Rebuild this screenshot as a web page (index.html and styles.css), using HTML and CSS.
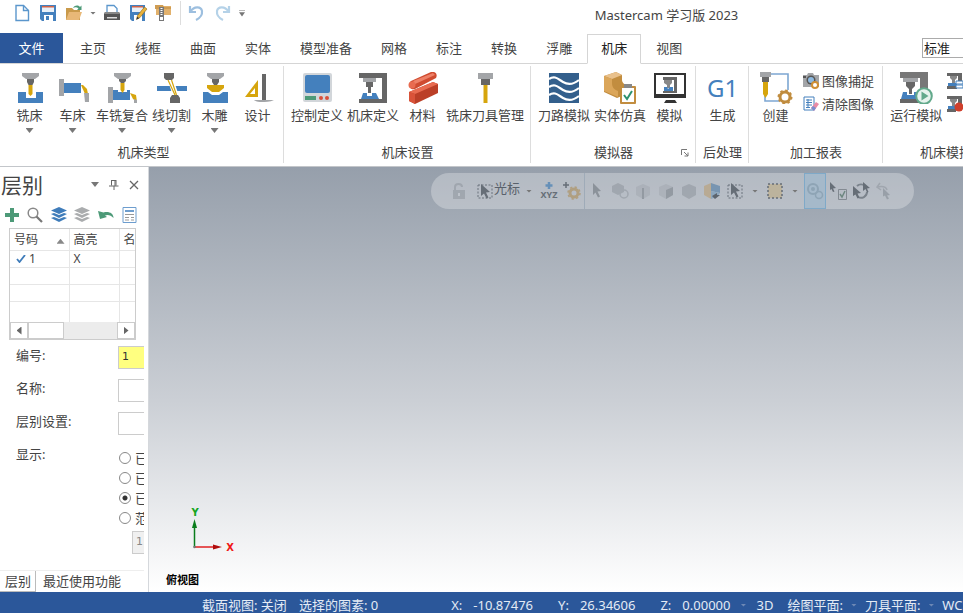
FILE: index.html
```html
<!DOCTYPE html>
<html lang="zh-CN">
<head>
  <meta charset="UTF-8">
  <title>Mastercam 学习版 2023</title>
  <link rel="stylesheet" href="styles.css">
</head>
<body>

<!-- Title bar -->
<header class="titlebar">
  <div class="quick">
    <button aria-label="新建"><svg width="20" height="20" viewBox="0 0 20 20"><path d="M4 2.5h7.500l5 5V17.500H4z" fill="#fff" stroke="#5b96cc" stroke-width="1.400"/><path d="M11.500 2.500v5h5" fill="none" stroke="#5b96cc" stroke-width="1.400"/></svg></button>
    <button aria-label="保存"><svg width="20" height="20" viewBox="0 0 20 20"><path d="M2 2h16v16H4l-2-2z" fill="#4480bd"/><path d="M4 3h12v6H4z" fill="#e8f0f8"/><path d="M4 3h12v1.500H4z" fill="#d0644b"/><path d="M6 12h9v6H6z" fill="#fff"/><path d="M8 13h3v4H8z" fill="#4480bd"/></svg></button>
    <button aria-label="打开"><svg width="20" height="20" viewBox="0 0 20 20"><path d="M2 5h6l2 2h6v10H2z" fill="#c99a4b"/><path d="M2 17l3-8h13l-3 8z" fill="#e8b877"/><path d="M9 5c2-3 5-3 7-1l1.500-1.500V7H13l1.500-1.500C13 4 11 4 9 5z" fill="#4d9a78"/></svg></button>
    <i class="caret small"></i>
    <button aria-label="打印"><svg width="20" height="20" viewBox="0 0 20 20"><path d="M5 9V2.500h7l3 3V9" fill="#fff" stroke="#5b96cc" stroke-width="1.300"/><path d="M3 9h14l1 2v6H2v-6z" fill="#555"/><path d="M3 9h14l1 2H2z" fill="#888"/><path d="M5 14h10v1.500H5z" fill="#ddd"/></svg></button>
    <button aria-label="另存为"><svg width="20" height="20" viewBox="0 0 20 20"><path d="M2 2h15v16H4l-2-2z" fill="#4480bd"/><path d="M4 3h11v6H4z" fill="#e8f0f8"/><path d="M4 3h11v1.500H4z" fill="#d0644b"/><path d="M6 12h8v6H6z" fill="#fff"/><path d="M8.500 16.500l1-4L16.500 4l2.500 2-7 8.500z" fill="#e8b23c" stroke="#8a641c" stroke-width=".6"/><path d="M8.500 16.500l.7-2.700 2 1.500z" fill="#333"/></svg></button>
    <button aria-label="压缩"><svg width="20" height="20" viewBox="0 0 20 20"><path d="M2 3h15v9H2z" fill="#e2b16c"/><path d="M1 2h8l1 2h7v2H1z" fill="#cf9c52"/><path d="M5 4h5v14H5z" fill="#777"/><path d="M6.500 5h2v1h-2zM6.500 7h2v1h-2zM6.500 9h2v1h-2zM6.500 11h2v1h-2zM6 14h3v3H6z" fill="#fff"/></svg></button>
    <i class="quick-line"></i>
    <button aria-label="撤销"><svg width="20" height="20" viewBox="0 0 20 20"><path d="M3 3v6h6M3.500 8.500C7 3 14 3 15 8c.5 4-2 7-6 9" fill="none" stroke="#9dbfdf" stroke-width="2.200"/></svg></button>
    <button aria-label="重做"><svg width="20" height="20" viewBox="0 0 20 20"><path d="M16 3v6h-6M15.500 8.500C12 3 5 3 4 8c-.5 4 2 7 6 9" fill="none" stroke="#b5d2e8" stroke-width="2.200"/></svg></button>
    <i class="caret small more"></i>
  </div>
  <div class="app-title">Mastercam 学习版 2023</div>
</header>

<!-- Ribbon tabs -->
<nav class="tabs">
  <button class="tab file">文件</button>
  <button class="tab">主页</button>
  <button class="tab">线框</button>
  <button class="tab">曲面</button>
  <button class="tab">实体</button>
  <button class="tab">模型准备</button>
  <button class="tab">网格</button>
  <button class="tab">标注</button>
  <button class="tab">转换</button>
  <button class="tab">浮雕</button>
  <button class="tab active">机床</button>
  <button class="tab">视图</button>
  <select class="style-select" aria-label="线型"><option>标准</option></select>
</nav>

<!-- Ribbon -->
<section class="ribbon">
  <div class="group">
    <div class="tools">
      <button class="tool"><svg width="32" height="32" viewBox="0 0 32 32"><path d="M4 20h8v6h10v-6h7v11H4z" fill="#4480bd"/><path d="M8 1h17v3l-4 3h-9L8 4z" fill="#a3a5a8"/><path d="M13 7h7v3l-1.500 3h-4L13 10z" fill="#666"/><path d="M14.500 13h4v9l-2 2-2-2z" fill="#d6a50d"/></svg>铣床<i class="caret"></i></button>
      <button class="tool"><svg width="32" height="32" viewBox="0 0 32 32"><path d="M2 7h5v17H2z" fill="#a3a5a8"/><path d="M7 11h17v10H7z" fill="#4480bd"/><path d="M24 13h2l4 4 1 5h-3z" fill="#d6a50d"/><path d="M27 21h5v9h-4z" fill="#a3a5a8"/></svg>车床<i class="caret"></i></button>
      <button class="tool"><svg width="32" height="32" viewBox="0 0 32 32"><path d="M2 15h5v16H2z" fill="#a3a5a8"/><path d="M7 18h17v10H7z" fill="#4480bd"/><path d="M8 1h17v3l-4 3h-9L8 4z" fill="#a3a5a8"/><path d="M13 7h7v2l-2 2h-3l-2-2z" fill="#666"/><path d="M12 14h9v6h-9z" fill="#fff"/><path d="M14.500 11h4v7l-2 3-2-3z" fill="#d6a50d"/><path d="M24 21l6 2 1 7-4-3z" fill="#d6a50d"/><path d="M28 27l3 1v3h-3z" fill="#a3a5a8"/></svg>车铣复合<i class="caret"></i></button>
      <button class="tool"><svg width="32" height="32" viewBox="0 0 32 32"><path d="M1 14h30v5H1z" fill="#4480bd"/><path d="M13 12h6l3 9h-6z" fill="#fff"/><path d="M8 1h10v5l-2 2h-6L8 6zM16 23h6l2 3v5H14v-5z" fill="#666"/><path d="M12 8l7 15M15.500 8l5 15" stroke="#d6a50d" stroke-width="1.200"/></svg>线切割<i class="caret"></i></button>
      <button class="tool"><svg width="32" height="32" viewBox="0 0 32 32"><path d="M4 20h5l4 3h7l4-3h5v11H4z" fill="#4480bd"/><path d="M8 1h17v3l-4 3h-9L8 4z" fill="#a3a5a8"/><path d="M13 7h7v3l-2 3h-3l-2-3z" fill="#666"/><path d="M8 13h17v3l-5 4h-7l-5-4z" fill="#d6a50d"/></svg>木雕<i class="caret"></i></button>
      <button class="tool"><svg width="32" height="32" viewBox="0 0 32 32"><path d="M16 8v17H3zM13 16l-5 6h5z" fill="#d6a50d" fill-rule="evenodd"/><path d="M20 2h4v26h-4z" fill="#666"/><path d="M12 28h20c-4 2-9 2-12 2s-5 0-8-2z" fill="#a3a5a8"/></svg>设计</button>
    </div>
    <div class="group-name">机床类型</div>
  </div>

  <div class="group">
    <div class="tools">
      <button class="tool"><svg width="32" height="32" viewBox="0 0 32 32"><rect x="2" y="1" width="29" height="29" rx="2" fill="#d2d6da"/><rect x="4" y="3" width="25" height="18" rx="2" fill="#4480bd"/><path d="M4 24h11v4H4z" fill="#4d9a78"/><circle cx="20" cy="26" r="2" fill="#d9503a"/><circle cx="26" cy="26" r="2" fill="#d9503a"/></svg>控制定义</button>
      <button class="tool"><svg width="32" height="32" viewBox="0 0 32 32"><path d="M2 1h28v30H2v-4h23V6H2z" fill="#666"/><path d="M6 6h13v4H6z" fill="#a3a5a8"/><path d="M9 10h7v5h-2v6h-3v-6H9z" fill="#666"/><path d="M6 21h4v3h5v-3h4l3 6H4z" fill="#4480bd"/></svg>机床定义</button>
      <button class="tool"><svg width="32" height="32" viewBox="0 0 32 32"><path d="M4 9L24 0c4-1 7 2 5 6L8 17C3 19 0 12 4 9z" fill="#cf4b30"/><path d="M6 9L26 1l2 2L8 12z" fill="#ee8067"/><circle cx="5" cy="13" r="3.500" fill="#e86b50"/><path d="M2 20l24-10 5 2v9L8 32l-6-3z" fill="#bb3f27"/><path d="M2 20l24-10 5 2L8 22z" fill="#e86b50"/><path d="M2 20l6 2v10l-6-3z" fill="#d95339"/></svg>材料</button>
      <button class="tool"><svg width="32" height="32" viewBox="0 0 32 32"><path d="M9 1h15v6H9z" fill="#a3a5a8"/><path d="M12 7h9v6h-9z" fill="#666"/><path d="M14.500 13h4v18h-4z" fill="#d6a50d"/></svg>铣床刀具管理</button>
    </div>
    <div class="group-name">机床设置</div>
  </div>

  <div class="group">
    <div class="tools">
      <button class="tool"><svg width="32" height="32" viewBox="0 0 32 32"><path d="M1 1h30v30H1z" fill="#335f8c"/><path d="M1 7c6-4 9 0 14 3s11 2 16-2M1 15c6-4 9 0 14 3s11 2 16-2M1 23c6-4 9 0 14 3s11 2 16-2" fill="none" stroke="#fff" stroke-width="2.200"/></svg>刀路模拟</button>
      <button class="tool"><svg width="32" height="32" viewBox="0 0 32 32"><path d="M0 4l12-4 6 3v5c0 3 3 5 7 6v7l-12 5-13-6z" fill="#c28d3f"/><path d="M0 4l12-4 6 3-10 4z" fill="#e9c18c"/><path d="M0 4l8 3v4c0 5 3 7 6 8v6L0 19z" fill="#dba65a"/><rect x="16" y="14" width="16" height="18" rx="1" fill="#c28d3f"/><path d="M18 16h12v14H18z" fill="#fff"/><path d="M20 12h8v4h-8z" fill="#888"/><path d="M20 23l3 4 5-8" fill="none" stroke="#2c9270" stroke-width="2"/></svg>实体仿真</button>
      <button class="tool"><svg width="32" height="32" viewBox="0 0 32 32"><path d="M0 1h32v25H0z" fill="#333"/><path d="M2 3h28v19H2z" fill="#fff"/><path d="M12 28h9l2 3H10z" fill="#333"/><path d="M9 5h14v16H9v-2h11V8H9z" fill="#666"/><path d="M10 8h8v3l-2 2v3h-3v-3l-3-2z" fill="#888"/><path d="M10 15h3l1 2 2-2h3v4h-9z" fill="#4480bd"/></svg>模拟</button>
    </div>
    <div class="group-name">模拟器</div>
    <button class="launcher" aria-label="模拟器选项"><svg width="8" height="8" viewBox="0 0 8 8"><path d="M.5 6V.5H6M3 3l4 4M7 3.500V7H3.500" fill="none" stroke="#777"/></svg></button>
  </div>

  <div class="group">
    <div class="tools">
      <button class="tool"><span class="g1">G1</span>生成</button>
    </div>
    <div class="group-name">后处理</div>
  </div>

  <div class="group">
    <div class="tools">
      <button class="tool"><svg width="34" height="32" viewBox="0 0 34 32"><path d="M9 2h20v16M6 22v7h14" fill="none" stroke="#7da7d2" stroke-width="1.600"/><path d="M1 0h11v5H1z" fill="#a3a5a8"/><path d="M3 5h7v5H3z" fill="#666"/><path d="M4 10h5v12l-2.500 4L4 22z" fill="#d6a50d"/><circle cx="26" cy="25" r="5" fill="#fff" stroke="#c08c3e" stroke-width="3"/><circle cx="26" cy="25" r="6.700" fill="none" stroke="#c08c3e" stroke-width="1.600" stroke-dasharray="2.600 2.660"/></svg>创建</button>
      <div class="small-tools">
        <button class="small-tool"><svg width="16" height="16" viewBox="0 0 16 16"><path d="M0 2h4l1-2h5l1 2h5v12H0z" fill="#a3a5a8"/><path d="M0 3h3v2H0z" fill="#555"/><circle cx="8" cy="7" r="4.500" fill="#555"/><circle cx="8" cy="7" r="3" fill="#8db9e0"/><circle cx="12" cy="12" r="3" fill="#fff" stroke="#d08f34" stroke-width="2"/></svg>图像捕捉</button>
        <button class="small-tool"><svg width="16" height="16" viewBox="0 0 16 16"><path d="M1 1h10v13H1z" fill="#fff" stroke="#4480bd"/><path d="M3 4h6M3 6.500h6M3 9h6M3 11.500h4M5 3v9" stroke="#4480bd"/><path d="M8 12l5-6 3 2-5 7z" fill="#e98ba6"/><path d="M8 12l2-2 3 2-2 3z" fill="#7a8fd0"/></svg>清除图像</button>
      </div>
    </div>
    <div class="group-name">加工报表</div>
  </div>

  <div class="group wide">
    <div class="tools">
      <button class="tool"><svg width="34" height="32" viewBox="0 0 34 32"><path d="M1 0h28v30h-8V6H1z" fill="#777"/><path d="M4 6h15v4H4z" fill="#a3a5a8"/><path d="M7 10h9v4l-3 3v5h-3v-5l-3-3z" fill="#666"/><path d="M4 20h4v3h7v-3h4v7H2z" fill="#4480bd"/><path d="M1 27h20v4H1z" fill="#666"/><circle cx="25" cy="24" r="7.800" fill="#e6f3ed" stroke="#62a98b" stroke-width="2"/><path d="M22.500 19.500l7 4.500-7 4.500z" fill="#62a98b"/></svg>运行模拟</button>
      <div class="small-tools">
        <button class="small-tool" aria-label="模拟设置"><svg width="16" height="16" viewBox="0 0 16 16"><path d="M0 0h15v10h-4V3H0z" fill="#666"/><path d="M3 3h7v2L8 7v3H5V7L3 5z" fill="#888"/><path d="M1 10h9v3H1z" fill="#4480bd"/><path d="M0 13h10v3H0z" fill="#666"/><path d="M9 8h7v3H9zM9 12h7v3H9z" fill="#fff" stroke="#4480bd"/></svg></button>
        <button class="small-tool" aria-label="模拟记录"><svg width="16" height="16" viewBox="0 0 16 16"><path d="M0 0h15v10h-4V3H0z" fill="#666"/><path d="M3 3h7v2L8 7v3H5V7L3 5z" fill="#888"/><path d="M1 10h8v3H1z" fill="#4480bd"/><path d="M0 13h9v3H0z" fill="#666"/><circle cx="12" cy="11" r="4.500" fill="#cf3f2c"/></svg></button>
      </div>
    </div>
    <div class="group-name">机床模拟</div>
  </div>
</section>

<main class="work">
  <!-- Levels panel -->
  <aside class="panel">
    <div class="panel-head">
      <h2>层别</h2>
      <button aria-label="菜单"><i class="caret"></i></button>
      <button aria-label="固定"><svg width="10" height="10" viewBox="0 0 10 10"><path d="M2.500 0v5.500M7 0v5.500M2.500.5H7M0 6h9.500M5 6v4M6 0v6" fill="none" stroke="#666"/></svg></button>
      <button aria-label="关闭"><svg width="10" height="10" viewBox="0 0 10 10"><path d="M1 1l8 8M9 1L1 9" stroke="#666" stroke-width="1.300"/></svg></button>
    </div>
    <div class="panel-tools">
      <button aria-label="添加"><svg width="16" height="16" viewBox="0 0 16 16"><path d="M6 1h4v5h5v4h-5v5H6v-5H1V6h5z" fill="#4d9a78"/></svg></button>
      <button aria-label="查找"><svg width="16" height="16" viewBox="0 0 16 16"><circle cx="6" cy="6" r="4.800" fill="#fff" stroke="#888" stroke-width="1.500"/><path d="M9.500 9.500l5.500 5.500" stroke="#777" stroke-width="2.200"/></svg></button>
      <button aria-label="显示全部"><svg width="16" height="16" viewBox="0 0 16 16"><path d="M8 0l8 3.500L8 7 0 3.500zM0 7l3-1 5 2 5-2 3 1-8 4zM0 11l3-1 5 2 5-2 3 1-8 4z" fill="#3f7cba"/></svg></button>
      <button aria-label="隐藏全部"><svg width="16" height="16" viewBox="0 0 16 16"><path d="M8 0l8 3.500L8 7 0 3.500zM0 7l3-1 5 2 5-2 3 1-8 4zM0 11l3-1 5 2 5-2 3 1-8 4z" fill="#aaacae"/></svg></button>
      <button aria-label="重置"><svg width="16" height="16" viewBox="0 0 16 16"><path d="M0 4l2 8 7-2-2-1.500c3-1.500 6 0 8.500 2.500 0-5-5-7-10-5.500z" fill="#4d9a78"/></svg></button>
      <button aria-label="选项"><svg width="16" height="16" viewBox="0 0 16 16"><path d="M2 .5h13v15H2z" fill="#fff" stroke="#6d9dce"/><path d="M4 3h9v2H4z" fill="#6d9dce"/><path d="M4 7.500h9M4 10.500h4M4 13h4M10 10.500h3M10 13h3" stroke="#999"/></svg></button>
    </div>

    <div class="level-box">
      <table class="levels">
        <thead>
          <tr><th class="num">号码<i class="sort"></i></th><th class="lit">高亮</th><th>名</th></tr>
        </thead>
        <tbody>
          <tr><td><svg width="10" height="8" viewBox="0 0 10 8"><path d="M1 4l2.500 3L9 0" fill="none" stroke="#3f7cba" stroke-width="1.800"/></svg>1</td><td>X</td><td></td></tr>
          <tr><td></td><td></td><td></td></tr>
          <tr><td></td><td></td><td></td></tr>
          <tr><td></td><td></td><td></td></tr>
        </tbody>
      </table>
      <div class="scroll">
        <button aria-label="向左"><i class="arrow-left"></i></button>
        <span class="thumb"></span>
        <button class="end" aria-label="向右"><i class="arrow-right"></i></button>
      </div>
    </div>

    <form class="level-form">
      <label for="levelNumber">编号:</label>
      <input class="field yellow" id="levelNumber" type="text" value="1">
      <label for="levelName">名称:</label>
      <input class="field" id="levelName" type="text">
      <label for="levelSet">层别设置:</label>
      <input class="field" id="levelSet" type="text">
      <span class="show-label">显示:</span>
      <div class="radios">
        <label><input type="radio" name="show">已命名</label>
        <label><input type="radio" name="show">已使用</label>
        <label><input type="radio" name="show" checked>已命名或已使用</label>
        <label><input type="radio" name="show">范围</label>
        <input class="range" type="text" value="1" aria-label="范围" disabled>
      </div>
    </form>

    <div class="panel-tabs">
      <button class="current">层别</button>
      <button>最近使用功能</button>
    </div>
  </aside>

  <!-- Graphics window -->
  <section class="canvas">
    <div class="select-bar">
      <button aria-label="锁定"><svg width="18" height="18" viewBox="0 0 18 18" class="dim"><path d="M3 8h12v9H3z" fill="#8b929a"/><path d="M5 8V5c0-4 7-4 7 0" fill="none" stroke="#8b929a" stroke-width="2"/><path d="M8 11h2v3H8z" fill="#c3c8cf"/></svg></button>
      <button class="with-text"><svg width="18" height="18" viewBox="0 0 18 18"><path d="M2 3h14v13H2z" fill="none" stroke="#6b737c" stroke-dasharray="2 1.500"/><path d="M5 2l9 8-4 .5 2.500 5-2 1-2.500-5L5 14z" fill="#666e77"/></svg><span>光标</span></button>
      <i class="caret small"></i>
      <button aria-label="坐标"><svg width="20" height="18" viewBox="0 0 20 18"><path d="M10 0v7M6.500 3.500h7" stroke="#6690b8" stroke-width="2.500"/><text x="10" y="16" class="xyz">XYZ</text></svg></button>
      <button aria-label="选择设置"><svg width="18" height="18" viewBox="0 0 18 18"><path d="M3 0v6M0 3h6" stroke="#666e77" stroke-width="1.500"/><circle cx="11" cy="11" r="4" fill="none" stroke="#b09f80" stroke-width="3"/><circle cx="11" cy="11" r="6" fill="none" stroke="#b09f80" stroke-width="1.500" stroke-dasharray="2.300 2.400"/></svg></button>
      <i class="bar-line"></i>
      <button aria-label="选择"><svg width="18" height="18" viewBox="0 0 18 18"><path d="M5 1l8 8-3.500.5 2.500 5-2 1-2.500-5L5 13z" fill="#8b929a"/></svg></button>
      <button aria-label="实体"><svg width="18" height="18" viewBox="0 0 18 18" class="dim"><path d="M1 4l6-3 6 3v6l-6 3-6-3z" fill="#8b929a"/><circle cx="13" cy="12" r="4" fill="none" stroke="#8b929a" stroke-width="1.500"/></svg></button>
      <button aria-label="边界"><svg width="18" height="18" viewBox="0 0 18 18" class="dim"><path d="M2 5l7-3 7 3v8l-7 4-7-4z" fill="#a2a8b0"/><path d="M9 6v11" stroke="#707880" stroke-width="2"/></svg></button>
      <button aria-label="实体面"><svg width="18" height="18" viewBox="0 0 18 18" class="dim"><path d="M2 5l7-3 7 3v8l-7 4-7-4z" fill="#a2a8b0"/><path d="M9 8l7-3v8l-7 4z" fill="#707880"/></svg></button>
      <button aria-label="主体"><svg width="18" height="18" viewBox="0 0 18 18" class="dim"><path d="M2 5l7-3 7 3v8l-7 4-7-4z" fill="#8b929a"/></svg></button>
      <button aria-label="背面"><svg width="18" height="18" viewBox="0 0 18 18"><path d="M1 4l7-3v16l-7-4z" fill="#b8aa94"/><path d="M8 1l9 3v7l-9-2z" fill="#7895b1"/><path d="M8 9l9 2-3 4-6 2z" fill="#8ca7bf"/><path d="M9 14l5-3v2h3l-5 4z" fill="#5d656e"/></svg></button>
      <button aria-label="窗选"><svg width="18" height="18" viewBox="0 0 18 18"><path d="M2 3h14v13H2z" fill="none" stroke="#6b737c" stroke-dasharray="2 1.500"/><path d="M5 1l9 8-4 .5 2.500 5-2 1-2.500-5L5 13z" fill="#666e77"/></svg></button>
      <i class="caret small"></i>
      <button aria-label="范围内"><svg width="18" height="18" viewBox="0 0 18 18"><path d="M2 2h14v14H2z" fill="#bcb39d" stroke="#666e77" stroke-width="1.500" stroke-dasharray="2 2"/></svg></button>
      <i class="caret small"></i>
      <button class="on" aria-label="验证选择"><svg width="18" height="18" viewBox="0 0 18 18" class="dim"><circle cx="7" cy="7" r="5" fill="none" stroke="#7890a2" stroke-width="2"/><circle cx="7" cy="7" r="2" fill="#7890a2"/><circle cx="13" cy="13" r="3.500" fill="none" stroke="#7890a2" stroke-width="1.500"/></svg></button>
      <button aria-label="反选"><svg width="18" height="18" viewBox="0 0 18 18"><path d="M1 0l6 6-3 .5 1.500 3-1.500.5-1.500-3L1 8z" fill="#666e77"/><path d="M9.500 7.500h8v10h-8z" fill="none" stroke="#838a92"/><path d="M11 12l2 3 3-6" fill="none" stroke="#6d8780" stroke-width="1.500"/></svg></button>
      <button aria-label="循环选择"><svg width="18" height="18" viewBox="0 0 18 18"><path d="M5 4a6 6 0 0 1 8 0M15 10a6 6 0 0 1-9 5" fill="none" stroke="#7b838c" stroke-width="2"/><path d="M1 4l8 7-3.500.5 2 4-2 1-2-4L1 14zM11 0l7 6-3 .5 1.500 3.500-1.500.5-1.500-3.500L11 9z" fill="#666e77"/></svg></button>
      <button aria-label="上一选择"><svg width="18" height="18" viewBox="0 0 18 18" class="dim"><path d="M5 1L2 5l4 3M2 5c5-1 9-1 10 3" fill="none" stroke="#8b929a" stroke-width="1.500"/><path d="M8 6l7 7-3 .5 2 3-2 1-2-4-2 1z" fill="#7b838c"/></svg></button>
    </div>

    <svg class="axes" width="50" height="50" viewBox="0 0 50 50">
      <path d="M10.500 41V20" stroke="#0a7d1c" stroke-width="1.500"/>
      <path d="M8 22l2.500-9 2.500 9z" fill="#0a7d1c"/>
      <path d="M11 41h18" stroke="#e02020" stroke-width="1.500"/>
      <path d="M29 38.500l9 2.500-9 2.500z" fill="#b00d0d"/>
      <circle cx="10.500" cy="41" r="1.300" fill="#777"/>
      <text x="11" y="10" class="axis-y">Y</text>
      <text x="46" y="45" class="axis-x">X</text>
    </svg>
    <div class="view-name">俯视图</div>
  </section>
</main>

<footer class="status">
  <span class="section-view">截面视图: 关闭</span>
  <span class="picked">选择的图素: 0</span>
  <span class="coord"><b>X:</b>-10.87476</span>
  <span class="coord"><b>Y:</b>26.34606</span>
  <span class="coord"><b>Z:</b>0.00000</span>
  <i class="caret small"></i>
  <span class="mode">3D</span>
  <span>绘图平面:</span>
  <i class="caret small"></i>
  <span>刀具平面:</span>
  <i class="caret small"></i>
  <span>WCS:</span>
</footer>

</body>
</html>
```
FILE: styles.css
```css
* {
  box-sizing: border-box;
}

body {
  margin: 0;
  height: 100vh;
  display: flex;
  flex-direction: column;
  overflow: hidden;
  background: #fff;
  color: #444;
  font-family: "Noto Sans", "Noto Sans CJK SC", sans-serif;
  font-size: 13px;
  line-height: 18px;
}

button {
  margin: 0;
  padding: 0;
  border: none;
  background: none;
  color: inherit;
  font: inherit;
  white-space: nowrap;
}

svg {
  display: block;
  flex: none;
}

.caret {
  display: block;
  width: 8px;
  height: 5px;
  flex: none;
  background: #777;
  clip-path: polygon(0 0, 100% 0, 50% 100%);
}

.caret.small {
  width: 6px;
  height: 3px;
}

/* title bar */
.titlebar {
  display: flex;
  flex: none;
  height: 33px;
}

.quick {
  display: flex;
  align-items: center;
  gap: 6px;
  height: 26px;
  padding-left: 12px;
}

.quick-line {
  width: 1px;
  height: 24px;
  background: #ddd;
}

.quick .more {
  height: 7px;
  clip-path: polygon(0 0, 100% 0, 100% 15%, 0 15%, 0 40%, 100% 40%, 50% 100%, 0 40%);
}

.app-title {
  flex: 1;
  padding: 6px 0 0 125px;
  text-align: center;
}

/* tabs */
.tabs {
  display: flex;
  flex: none;
  align-items: flex-end;
  gap: 1px;
  height: 31px;
  border-bottom: 1px solid #d5d5d5;
}

.tab {
  flex: none;
  height: 30px;
  padding: 0 14px;
}

.tab.file {
  width: 63px;
  margin-right: 2px;
  background: #2b579a;
  color: #fff;
}

.tab.active {
  margin-bottom: -1px;
  padding: 0 13px 2px;
  border: 1px solid #d5d5d5;
  border-bottom-color: #fff;
  background: #fff;
  color: #222;
}

.style-select {
  appearance: none;
  width: 41px;
  height: 20px;
  margin: 0 0 5px auto;
  padding: 0 1px;
  border: 1px solid #ababab;
  border-right: none;
  border-radius: 0;
  background: #fff;
  color: #222;
  font: inherit;
}

/* ribbon */
.ribbon {
  display: flex;
  flex: none;
  height: 103px;
  padding: 2px 0 3px 3px;
  overflow: hidden;
  border-bottom: 1px solid #c3c6ca;
}

.group {
  position: relative;
  display: flex;
  flex: none;
  flex-direction: column;
  justify-content: space-between;
  padding: 6px 4px 0 5px;
  border-right: 1px solid #ddd;
}

.group.wide {
  width: 126px;
}

.tools {
  display: flex;
  align-items: flex-start;
}

.tool {
  display: flex;
  flex-direction: column;
  align-items: center;
  min-width: 43px;
  padding: 0 2px;
}

.tool svg,
.g1 {
  margin-bottom: 2px;
}

.tool .caret {
  margin-top: 4px;
}

.g1 {
  height: 32px;
  color: #4480bd;
  font-size: 24px;
  line-height: 32px;
}

.small-tools {
  display: flex;
  flex-direction: column;
  gap: 5px;
  padding: 0 4px 0 6px;
}

.wide .small-tools {
  padding-left: 3px;
}

.small-tool {
  display: flex;
  align-items: center;
  gap: 3px;
  height: 18px;
}

.group-name {
  text-align: center;
  line-height: 22px;
}

.launcher {
  position: absolute;
  right: 6px;
  bottom: 6px;
}

/* work area */
.work {
  display: flex;
  flex: 1;
  min-height: 0;
}

.panel {
  display: flex;
  flex: none;
  flex-direction: column;
  width: 149px;
  padding-right: 4px;
  border-right: 1px solid #d5d8dc;
}

.panel-head {
  display: flex;
  align-items: center;
  gap: 10px;
  height: 35px;
  padding: 0 5px 0 1px;
}

.panel-head h2 {
  flex: 1;
  margin: 0;
  font-size: 21px;
  font-weight: 400;
  line-height: 30px;
}

.panel-tools {
  display: flex;
  justify-content: space-between;
  padding: 5px 7px 5px 4px;
}

.level-box {
  flex: none;
  width: 127px;
  margin-left: 9px;
  border: 1px solid #ccc;
}

.levels {
  width: 100%;
  table-layout: fixed;
  border-collapse: collapse;
  font-size: 12px;
}

.levels th,
.levels td {
  height: 17px;
  padding: 0 4px;
  overflow: hidden;
  border-right: 1px solid #e6e6e6;
  border-bottom: 1px solid #e6e6e6;
  font-weight: 400;
  line-height: 16px;
  text-align: left;
  white-space: nowrap;
}

.levels th {
  height: 21px;
  padding-top: 1px;
}

.levels th:last-child,
.levels td:last-child {
  border-right: none;
}

.levels tr:last-child td {
  height: 21px;
  border-bottom: none;
}

.levels .num {
  width: 59px;
}

.levels .lit {
  width: 50px;
}

.levels td svg {
  display: inline-block;
  margin: 0 3px 0 2px;
}

.sort {
  float: right;
  width: 8px;
  height: 5px;
  margin-top: 7px;
  background: #888;
  clip-path: polygon(50% 0, 100% 100%, 0 100%);
}

.scroll {
  display: flex;
  height: 17px;
  background: #ececec;
}

.scroll button,
.thumb {
  display: flex;
  align-items: center;
  justify-content: center;
  width: 18px;
  border: 1px solid #ccc;
  background: #fff;
}

.scroll .thumb {
  width: 36px;
}

.scroll .end {
  margin-left: auto;
}

.arrow-left,
.arrow-right {
  width: 5px;
  height: 8px;
  background: #666;
  clip-path: polygon(100% 0, 100% 100%, 0 50%);
}

.arrow-right {
  clip-path: polygon(0 0, 100% 50%, 0 100%);
}

.level-form {
  display: grid;
  grid-template-columns: 102px 1fr;
  row-gap: 10px;
  padding: 6px 0 0 16px;
  overflow: hidden;
}

.field,
.range {
  width: 90px;
  height: 23px;
  padding: 0 3px 3px;
  border: 1px solid #ccc;
  background: #fff;
  color: #333;
  font: 11px "DejaVu Sans", sans-serif;
}

.field.yellow {
  background: #ffff80;
}

.radios {
  width: 120px;
  padding-top: 3px;
}

.radios label {
  display: flex;
  align-items: center;
  gap: 4px;
  height: 20px;
  white-space: nowrap;
}

.radios input[type="radio"] {
  appearance: none;
  flex: none;
  width: 12px;
  height: 12px;
  margin: 0 0 0 1px;
  border: 1px solid #888;
  border-radius: 50%;
}

.radios input[type="radio"]:checked {
  background: radial-gradient(circle, #333 0 2px, #fff 3px);
}

.range {
  display: block;
  margin: 3px 0 0 14px;
  background: #f0f0f0;
  color: #888;
}

.panel-tabs {
  display: flex;
  height: 22px;
  margin-top: auto;
  border-top: 1px solid #eee;
}

.panel-tabs button {
  padding: 0 7px 2px;
}

.panel-tabs .current {
  padding: 0 4px 1px 5px;
  border-right: 1px solid #bbb;
  border-bottom: 1px solid #bbb;
}

/* graphics window */
.canvas {
  position: relative;
  flex: 1;
  background: linear-gradient(#969fab, #cbcfd5 55%, #fff);
}

.select-bar {
  position: absolute;
  top: 6px;
  left: 282px;
  display: flex;
  align-items: center;
  gap: 1px;
  height: 36px;
  padding: 0 19px 0 17px;
  border-radius: 18px;
  background: rgba(255, 255, 255, 0.28);
  color: #59616b;
}

.select-bar button {
  display: flex;
  align-items: center;
  justify-content: center;
  width: 22px;
  height: 36px;
}

.select-bar .with-text {
  justify-content: flex-end;
  width: 49px;
}

.with-text span {
  margin-bottom: 6px;
}

.select-bar .caret {
  margin: 0 5px;
}

.select-bar .on {
  border: 1px solid #7fa9c8;
  background: #a5b9ca;
}

.bar-line {
  width: 1px;
  height: 36px;
  background: #9fabb8;
}

.dim {
  opacity: 0.5;
}

.xyz {
  fill: #666e77;
  font: bold 9px "Noto Sans", sans-serif;
  text-anchor: middle;
}

.axes {
  position: absolute;
  bottom: 36px;
  left: 35px;
}

.axis-x,
.axis-y {
  font: bold 10px "DejaVu Sans", sans-serif;
  text-anchor: middle;
}

.axis-x {
  fill: #f01818;
}

.axis-y {
  fill: #14a51e;
}

.view-name {
  position: absolute;
  bottom: 3px;
  left: 17px;
  color: #000;
  font-size: 11px;
  font-weight: 700;
}

/* status bar */
.status {
  display: flex;
  flex: none;
  align-items: center;
  gap: 12px;
  height: 21px;
  padding: 5px 0 0 202px;
  overflow: hidden;
  background: #2b579a;
  color: #e4ebf5;
  white-space: nowrap;
}

.status .picked {
  margin-right: 61px;
}

.coord {
  margin-right: 13px;
}

.coord b {
  margin-right: 11px;
  font-weight: 400;
}

.mode {
  margin-right: 2px;
}

.status .caret {
  margin: 0 -4px;
  background: #6d88b5;
}

.status .coord + .caret {
  margin: 0 -2px 0 -15px;
}
```
